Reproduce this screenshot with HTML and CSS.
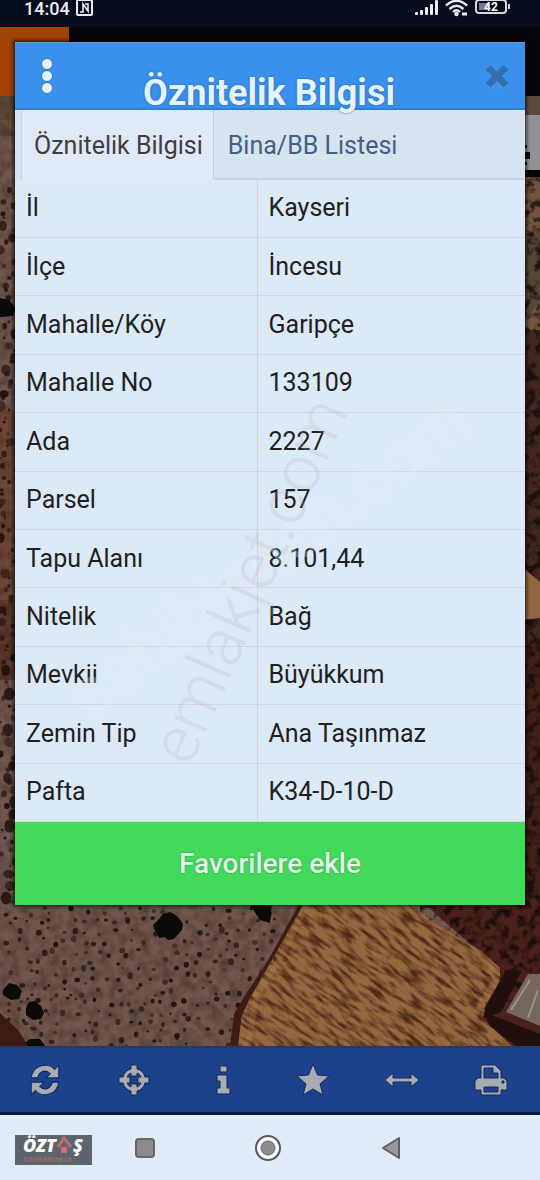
FILE: index.html
```html
<!DOCTYPE html>
<html lang="tr">
<head>
  <meta charset="UTF-8">
  <meta name="viewport" content="width=device-width, initial-scale=1.0">
  <title>Öznitelik Bilgisi</title>
  <link rel="stylesheet" href="styles.css">
</head>
<body>
  <header class="status-bar">
    <span class="clock">14:04</span>
    <svg class="nfc" width="18" height="18" viewBox="0 0 18 18" fill="none" stroke="#e8ebf2" stroke-width="2">
      <rect x="1" y="0" width="15" height="15" rx="1" />
      <path d="M4 12h3V4l5 7V4H9" stroke-width="1.600" />
    </svg>
    <svg class="signal" width="24" height="16" viewBox="0 0 24 16" fill="#e8ebf2">
      <rect x="0" y="12" width="3" height="3" rx="1" />
      <rect x="5" y="10" width="3" height="5" rx="1" />
      <rect x="10" y="7" width="3" height="8" rx="1" />
      <rect x="15" y="4" width="3" height="11" rx="1" />
      <rect x="20" y="0" width="3" height="15" rx="1" />
    </svg>
    <svg width="24" height="18" viewBox="0 0 24 18" fill="none" stroke="#e8ebf2" stroke-width="2.400">
      <path d="M1 5.500Q11.500-4 22 5.500M4.500 9Q11.500 2.500 18.500 9M8 12Q11.500 8.500 15 12" />
      <circle cx="11.500" cy="14" r="1" />
      <path d="M17 14h5" stroke-width="3" />
    </svg>
    <svg class="battery" width="36" height="16" viewBox="0 0 36 16">
      <rect x="1" y="0" width="30" height="13" rx="3" fill="none" stroke="#d5d8de" stroke-width="2" />
      <rect x="4" y="3" width="9" height="7" fill="#777c88" />
      <path d="M34 4v5" stroke="#d5d8de" stroke-width="2" />
      <text x="16" y="11" text-anchor="middle">42</text>
    </svg>
  </header>

  <main class="app">
    <!-- Satellite map behind the dialog -->
    <svg class="map" viewBox="0 27 540 1019" preserveAspectRatio="xMidYMax slice" aria-hidden="true">
      <defs>
        <filter id="ground" x="0" y="0" width="100%" height="100%" color-interpolation-filters="sRGB">
          <feTurbulence type="fractalNoise" baseFrequency="0.100" numOctaves="2" seed="4" />
          <feColorMatrix values="0 0 0 0 0.100  0 0 0 0 0.050  0 0 0 0 0.040  0.700 0 0 0 -0.250" />
        </filter>
        <filter id="furrow" x="0" y="0" width="100%" height="100%" color-interpolation-filters="sRGB">
          <feTurbulence type="fractalNoise" baseFrequency="0.050 0.240" numOctaves="3" seed="9" />
          <feColorMatrix values="0 0 0 0 0.300  0 0 0 0 0.160  0 0 0 0 0.090  3 0 0 0 -1.250" />
        </filter>
        <filter id="bush" x="0" y="0" width="100%" height="100%" color-interpolation-filters="sRGB">
          <feTurbulence type="fractalNoise" baseFrequency="0.110" numOctaves="3" seed="2" />
          <feColorMatrix values="0 0 0 0 0.080  0 0 0 0 0.040  0 0 0 0 0.030  4 0 0 0 -1.800" />
        </filter>
        <clipPath id="field">
          <path d="M306 900H408L432 922L480 950L500 968V985L482 1018L512 1046H238L242 1015L250 998L272 960Z" />
        </clipPath>
      </defs>
      <rect y="27" width="540" height="1019" fill="#70564d" />
      <rect y="96" width="540" height="40" fill="#604a39" />

      <!-- right edge -->
      <path d="M520 330H540V1000H520Z" fill="#422820" />
      <path d="M520 172H540V330H520Z" fill="#72543f" />
      <path d="M520 225L540 240V300L520 330Z" fill="#544636" />
      <path d="M420 900H540V1046H505L480 1015L500 970Z" fill="#4a211c" />
      <rect x="520" y="640" width="20" height="260" fill="#42211a" />
      <rect x="420" y="172" width="120" height="830" filter="url(#bush)" opacity="0.800" />
      <path d="M520 565L540 582V618L520 620Z" fill="#936641" />

      <!-- left edge -->
      <rect y="410" width="20" height="190" fill="#6b4637" />
      <rect y="600" width="20" height="80" fill="#5a372c" />
      <rect y="96" width="310" height="950" filter="url(#ground)" />
      <g id="trees" fill="#24120f"></g>
      <g fill="#0a0b08">
        <path d="M153 925l6-6 4-5 7-2 4 2 5 4 4 6-1 6-5 5-3 4-6 1-3-3-6 1-2-5-3-4z" />
        <path d="M3 990l6-7 8 2 5 6-3 8-8 1-8-5z" />
        <path d="M26 1008l3-6 6-1 6 5 3 7-3 6-8 1-7-5z" />
        <path d="M0 298l9 2 7 8-3 8-13 1z" />
        <path d="M250 905h22l-2 18-10-3zM22 1046l8-7h10l5 7z" />
      </g>
      <path d="M0 1013L18 1030L28 1046H0Z" fill="#3d1a14" />

      <!-- ploughed field -->
      <path d="M306 900L270 965L250 995L238 1015L234 1046" fill="none" stroke="#3d1c14" stroke-width="8" />
      <g clip-path="url(#field)">
        <rect x="230" y="895" width="290" height="155" fill="#95673f" />
        <rect x="130" y="720" width="480" height="480" filter="url(#furrow)" transform="rotate(38 370 970)" />
        <path d="M306 906L282 955L256 996L248 1046M412 906L486 954L496 980L474 1016" fill="none" stroke="#bd8955" stroke-width="6" opacity="0.250" />
      </g>
      <path d="M505 972l8-4 8 4-20 40-17 6 1-11zM484 1012L540 1034V1046H516L490 1026Z" fill="#200f0c" />
      <path d="M528 974H540V1026L506 1012Z" fill="#75675f" />
      <path d="M530 980L511 1010M538 990L528 1018" fill="none" stroke="#9a9087" stroke-width="2" />

      <!-- map control peeking out from behind the dialog -->
      <rect x="520" y="115" width="20" height="55" fill="#909095" />
      <rect x="520" y="170" width="20" height="7" fill="#080606" />
      <path d="M524 152h6v7h-6zM525 145h2v3h-2zM525 162h2v3h-2z" fill="#0a0a0c" />
    </svg>
    <div class="app-header"><div class="app-menu"></div></div>

    <section class="dialog" role="dialog" aria-labelledby="dialogTitle">
      <div class="dialog-header">
        <button class="icon-button" type="button" aria-label="Menü">
          <svg width="14" height="38" viewBox="0 0 14 38" fill="#e4f3fd" stroke="#3478c2" stroke-width="1">
            <circle cx="7" cy="7" r="5.500" />
            <circle cx="7" cy="19" r="5.500" />
            <circle cx="7" cy="31" r="5.500" />
          </svg>
        </button>
        <h1 id="dialogTitle">Öznitelik Bilgisi</h1>
        <button class="icon-button" type="button" aria-label="Kapat">
          <svg width="26" height="26" viewBox="0 0 26 26">
            <path d="M4 5.500L22 23.500M22 5.500L4 23.500" stroke="#56a5f2" stroke-width="7" />
            <path d="M4 4.500L22 22.500M22 4.500L4 22.500" stroke="#3370b1" stroke-width="7" />
          </svg>
        </button>
      </div>

      <nav class="tabs">
        <a class="tab active" href="#attributes">Öznitelik Bilgisi</a>
        <a class="tab" href="#buildings">Bina/BB Listesi</a>
      </nav>

      <table class="attributes" id="attributes">
        <tbody>
          <tr><th scope="row">İl</th><td>Kayseri</td></tr>
          <tr><th scope="row">İlçe</th><td>İncesu</td></tr>
          <tr><th scope="row">Mahalle/Köy</th><td>Garipçe</td></tr>
          <tr><th scope="row">Mahalle No</th><td>133109</td></tr>
          <tr><th scope="row">Ada</th><td>2227</td></tr>
          <tr><th scope="row">Parsel</th><td>157</td></tr>
          <tr><th scope="row">Tapu Alanı</th><td>8.101,44</td></tr>
          <tr><th scope="row">Nitelik</th><td>Bağ</td></tr>
          <tr><th scope="row">Mevkii</th><td>Büyükkum</td></tr>
          <tr><th scope="row">Zemin Tip</th><td>Ana Taşınmaz</td></tr>
          <tr><th scope="row">Pafta</th><td>K34-D-10-D</td></tr>
        </tbody>
      </table>

      <button class="favorite" type="button">Favorilere ekle</button>

      <!-- Listing watermarks -->
      <svg class="watermark" viewBox="15 42 510 863" aria-hidden="true">
        <text class="mark-light" x="90" y="720" transform="rotate(-37 90 720)">sahibinden.com</text>
        <text class="mark" x="190" y="768" transform="rotate(-66 190 768)">emlakjet.com</text>
      </svg>
    </section>
  </main>

  <nav class="toolbar" aria-label="Harita araçları">
    <button type="button" aria-label="Yenile">
      <svg width="34" height="34" viewBox="0 0 32 32">
        <path d="M3 14C5 0 20 0 25 6L29 2V14H17L21 10C17 6 11 7 9 14ZM29 18C27 32 12 32 7 26L3 30V18H15L11 22C15 26 21 25 23 18Z" />
      </svg>
    </button>
    <button type="button" aria-label="Konum">
      <svg width="32" height="32" viewBox="0 0 32 32">
        <path fill-rule="evenodd" d="M13 1h6v4a11 11 0 0 1 8 8h4v6h-4a11 11 0 0 1-8 8v4h-6v-4a11 11 0 0 1-8-8H1v-6h4a11 11 0 0 1 8-8zM13 9a7 7 0 0 0-4 4h3v6H9a7 7 0 0 0 4 4v-3h6v3a7 7 0 0 0 4-4h-3v-6h3a7 7 0 0 0-4-4v3h-6z" />
      </svg>
    </button>
    <button type="button" aria-label="Bilgi">
      <svg width="32" height="32" viewBox="0 0 32 32">
        <path d="M13 2h7v6h-7zM10 11h10v13h3v6H10v-6h3v-7h-3z" />
      </svg>
    </button>
    <button type="button" aria-label="Favoriler">
      <svg width="34" height="34" viewBox="0 0 34 34">
        <path d="M17 1L21.500 12L33 13L24 21L27 32L17 26L7 32L10 21L1 13L12.500 12Z" />
      </svg>
    </button>
    <button type="button" aria-label="Ölçüm">
      <svg width="36" height="32" viewBox="0 0 36 32">
        <path d="M1 16L9 9V14H27V9L35 16L27 23V18H9V23Z" />
      </svg>
    </button>
    <button type="button" aria-label="Yazdır">
      <svg width="34" height="34" viewBox="0 0 34 34">
        <path fill-rule="evenodd" d="M7 2H21L27 8V15H30L33 18V27H27V32H7V27H1V18L4 15H7ZM10 5V15H24V10H19V5ZM10 24V29H24V24ZM28 18V20H30V18Z" />
      </svg>
    </button>
  </nav>

  <footer class="nav-bar">
    <div class="logo">
      <div class="logo-name">
        <span>ÖZT</span>
        <svg width="15" height="20" viewBox="0 0 15 20">
          <path d="M1 12L7 3L14 12" fill="none" stroke="#bd6c75" stroke-width="3" />
          <rect x="4" y="12" width="6" height="6" fill="#d06c75" />
        </svg>
        <span>Ş</span>
      </div>
      <div class="logo-sub">GAYRİMENKUL</div>
    </div>
    <button type="button" aria-label="Son uygulamalar">
      <svg width="28" height="28" viewBox="0 0 28 28">
        <rect x="5" y="5" width="18" height="18" rx="3" fill="#8b8b8c" stroke="#656668" stroke-width="2" />
      </svg>
    </button>
    <button type="button" aria-label="Ana ekran">
      <svg width="28" height="28" viewBox="0 0 28 28">
        <circle cx="14" cy="14" r="12" fill="#f7fafc" stroke="#56585c" stroke-width="2" />
        <circle cx="14" cy="14" r="7" fill="#8b8b8c" stroke="#656668" stroke-width="1" />
      </svg>
    </button>
    <button type="button" aria-label="Geri">
      <svg width="28" height="28" viewBox="0 0 28 28">
        <path d="M6 14L22 4V24Z" fill="#98999a" stroke="#5e6064" stroke-width="2" stroke-linejoin="round" />
      </svg>
    </button>
  </footer>

  <script>
    // Scatter the orchard trees over the map, always in the same places
    const trees = document.getElementById('trees');
    let seed = 17;

    function random() {
      seed = (seed * 16807) % 2147483647;
      return seed / 2147483647;
    }

    function addTree(x, y, size) {
      const tree = document.createElementNS('http://www.w3.org/2000/svg', 'ellipse');
      tree.setAttribute('cx', x);
      tree.setAttribute('cy', y);
      tree.setAttribute('rx', size);
      tree.setAttribute('ry', size * (0.7 + random() * 0.6));
      tree.setAttribute('opacity', 0.5 + random() * 0.5);
      trees.appendChild(tree);
    }

    for (let y = 908; y < 1046; y += 10) {
      for (let x = 4; x < 270; x += 11) {
        if (random() < 0.78) {
          addTree(x + random() * 9, y + random() * 8, 1.3 + random() * 1.6);
        }
      }
    }

    for (let y = 190; y < 905; y += 12) {
      addTree(random() * 15, y, 1.5 + random() * 4);
      addTree(random() * 15, y + 4, 1 + random() * 2);
    }
  </script>
</body>
</html>
```
FILE: styles.css
```css
* {
  box-sizing: border-box;
}
body {
  display: flex;
  flex-direction: column;
  min-height: 100vh;
  margin: 0;
  background-color: #05060b;
  font-family: Roboto, "Liberation Sans", sans-serif;
}
button {
  padding: 0;
  border: none;
  background: none;
  font-family: inherit;
  cursor: pointer;
}
svg {
  display: block;
}

/* Status bar */
.status-bar {
  display: flex;
  gap: 6px;
  height: 27px;
  padding: 0 29px 0 24px;
  background-color: #080d1d;
  color: #e8ebf2;
}
.clock {
  font-size: 18px;
  font-weight: 500;
  line-height: 18px;
}
.signal {
  margin-left: auto;
}
.battery text {
  fill: #ffffff;
  font-size: 12px;
  font-weight: 700;
}

/* Map area */
.app {
  position: relative;
  flex: 1;
  padding: 15px 15px 141px;
}
.map {
  position: absolute;
  top: 0;
  left: 0;
  width: 100%;
  height: 100%;
}
.app-header {
  position: absolute;
  top: 0;
  left: 0;
  width: 100%;
  height: 69px;
  background-color: #05060b;
}
.app-menu {
  width: 69px;
  height: 69px;
  background-color: #a04208;
}

/* Dialog */
.dialog {
  position: relative;
  background-color: #dce9f6;
  box-shadow: 0 0 3px 2px rgba(0, 0, 0, 0.6);
}
.dialog-header {
  display: flex;
  justify-content: space-between;
  height: 68px;
  padding: 0 15px 0 25px;
  border-top: 1px solid #5c9fd8;
  border-bottom: 2px solid #2f7fd4;
  background-color: #3990ed;
}
.dialog-header h1 {
  margin: 0;
  padding-top: 29px;
  color: #e4f3fd;
  font-size: 36px;
  font-weight: 700;
  line-height: 42px;
  text-shadow: 0 0 2px #1d5491;
}
.icon-button {
  height: 66px;
}
.tabs {
  display: flex;
  height: 70px;
  padding-left: 6px;
  background-color: #d7e3ee;
}
.tab {
  padding: 0 14px;
  border-bottom: 2px solid #cbd3dd;
  color: #445f86;
  font-size: 25px;
  line-height: 72px;
  text-decoration: none;
}
.tab:last-child {
  flex: 1;
}
.tab.active {
  padding: 0 10px 0 12px;
  border-right: 1px solid #c6cfd9;
  border-bottom-color: #dfeaf6;
  border-left: 1px solid #cbd3dd;
  background-color: #dfeaf6;
  color: #413c42;
}
.attributes {
  width: 100%;
  height: 642px;
  border-collapse: collapse;
  color: #211f22;
  font-size: 25px;
  line-height: 28px;
}
.attributes tr {
  background-color: #dce9f6;
  border-bottom: 1px solid #d3d6dc;
}
.attributes th,
.attributes td {
  padding: 0 11px;
  font-weight: 400;
  text-align: left;
}
.attributes th {
  width: 242px;
  border-right: 1px solid #cfd2db;
}
.favorite {
  display: block;
  width: 100%;
  height: 83px;
  background-color: #42da5b;
  color: #e4f8e9;
  font-size: 28px;
  font-weight: 500;
  text-shadow: 0 0 2px #27913a;
}
.watermark {
  position: absolute;
  top: 0;
  left: 0;
  width: 100%;
  height: 100%;
  pointer-events: none;
}
.mark {
  fill: #b5aeb4;
  fill-opacity: 0.22;
  font-size: 66px;
  font-weight: 300;
}
.mark-light {
  fill: #ebf0f6;
  fill-opacity: 0.3;
  font-size: 68px;
}

/* Map tools */
.toolbar {
  display: grid;
  grid-template-columns: repeat(6, 1fr);
  height: 69px;
  padding-right: 4px;
  border-top: 2px solid #243a6c;
  border-bottom: 3px solid #0b1a3a;
  background-color: #1c428b;
}
.toolbar button {
  display: flex;
  align-items: center;
  justify-content: center;
}
.toolbar path {
  fill: #a9abb2;
  stroke: #142b59;
  stroke-width: 1;
}

/* System navigation */
.nav-bar {
  position: relative;
  display: flex;
  align-items: center;
  justify-content: center;
  gap: 95px;
  height: 65px;
  padding-right: 4px;
  background-color: #dfebf7;
}
.logo {
  position: absolute;
  top: 20px;
  left: 15px;
  width: 77px;
  height: 30px;
  padding-left: 8px;
  background-color: #5c656b;
}
.logo-name {
  display: flex;
  gap: 1px;
  height: 21px;
  color: #ffffff;
  font-family: "Open Sans", sans-serif;
  font-size: 18px;
  font-style: italic;
  font-weight: 800;
  line-height: 21px;
}
.logo-sub {
  color: #b76d75;
  font-family: "Liberation Sans", sans-serif;
  font-size: 7px;
  line-height: 8px;
}
```
